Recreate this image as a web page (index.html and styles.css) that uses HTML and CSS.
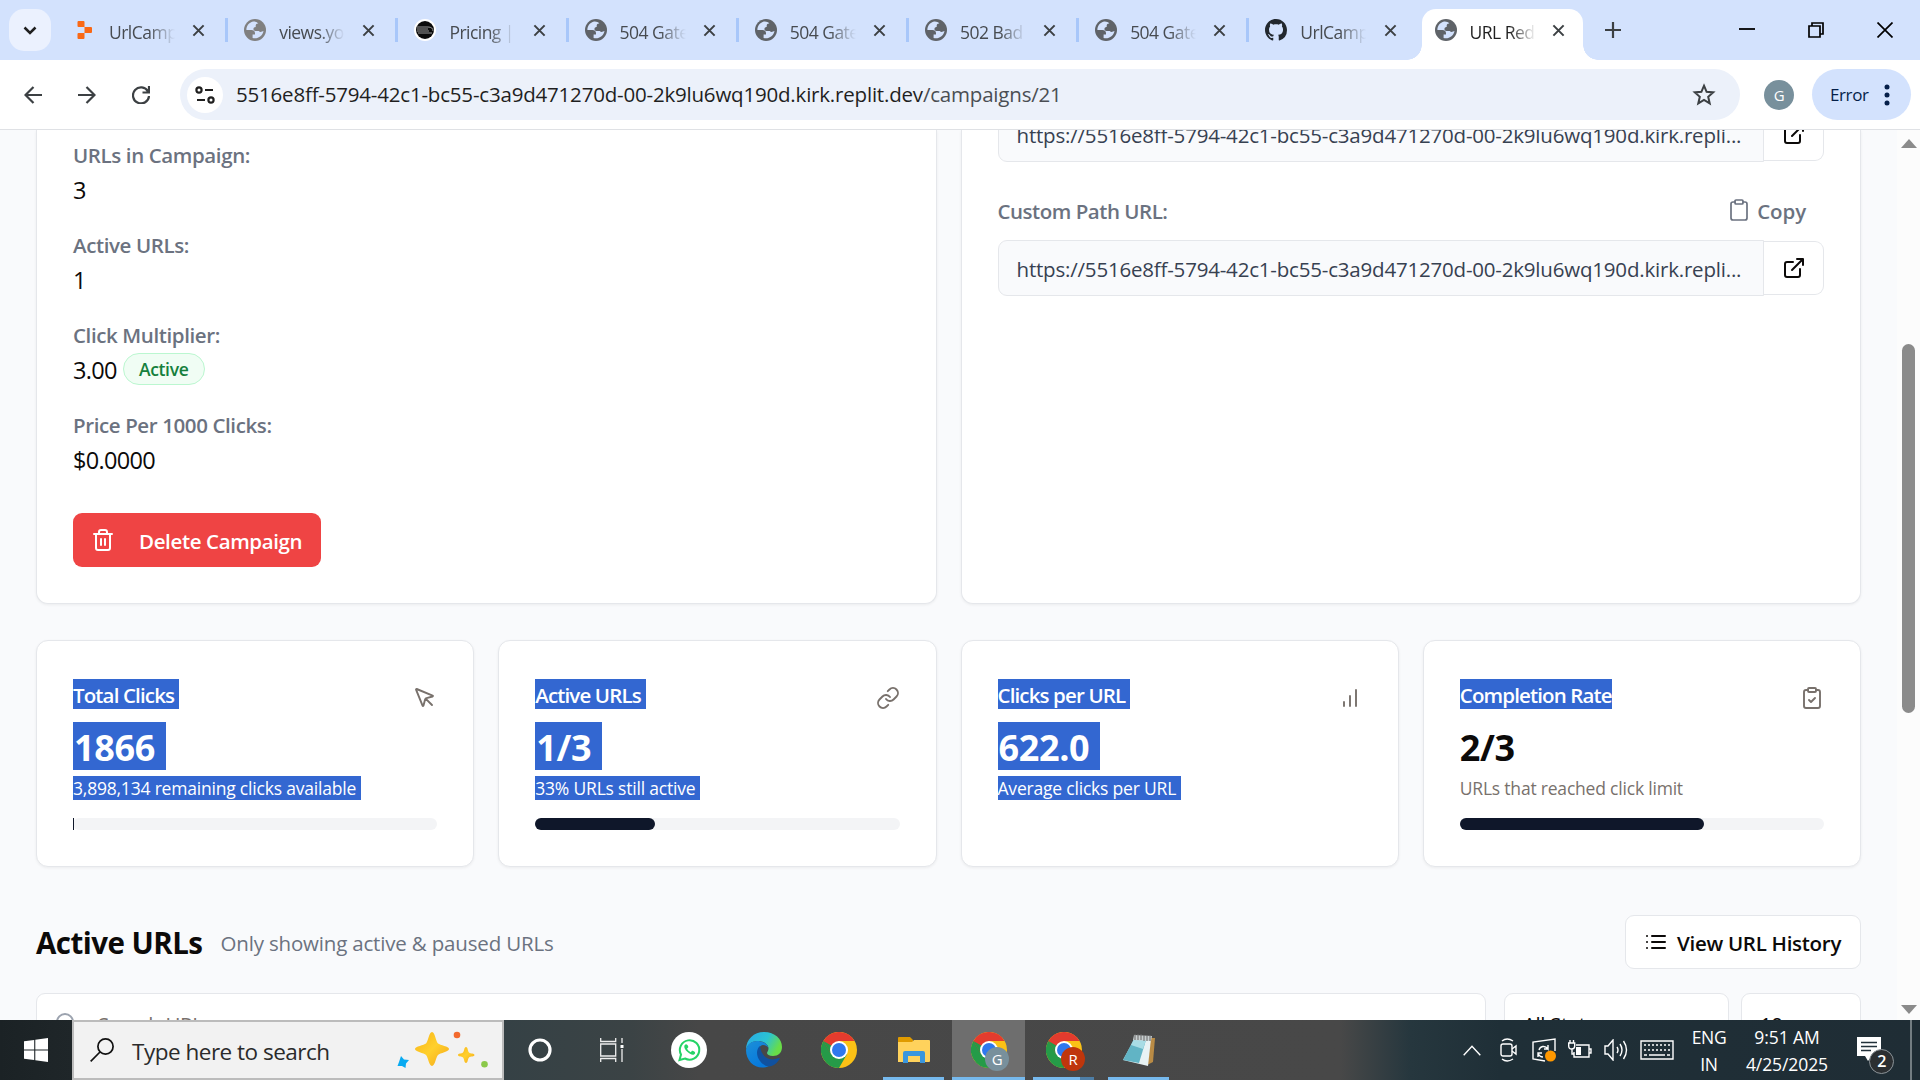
FILE: index.html
```html
<!DOCTYPE html>
<html lang="en">
<head>
<meta charset="utf-8">
<title>URL Redirector</title>
<link rel="stylesheet" href="styles.css">
</head>
<body>
<svg class="defs" width="0" height="0">
  <symbol id="globe" viewBox="0 0 22 22"><circle cx="11" cy="11" r="11" fill="currentColor"/><path class="land" d="M9 2.600C5 3.500 2.400 7 2.400 11h5.200c1.800 0 3.400 1.300 3.400 3v1.500H8.600V19c5 1.400 10-2 10.900-7l-1.500.6c-1 .8-2.500.6-3.200-.6h-3.300c-1.400 0-2.300-1.200-2-2.500.3-1 1.200-1.500 2.200-1.500V6.500c0-1.200 1-2 2.100-2h.6C13 3 11 2.300 9 2.600z"/></symbol>
  <symbol id="x" viewBox="0 0 14 14"><path d="M1.500 1.500l11 11M12.500 1.500l-11 11" fill="none" stroke="currentColor" stroke-width="2.200"/></symbol>
  <symbol id="external" viewBox="0 0 24 24"><path d="M15 3h6v6M10 14 21 3M18 13v6a2 2 0 0 1-2 2H5a2 2 0 0 1-2-2V8a2 2 0 0 1 2-2h6"/></symbol>
  <symbol id="chevron" viewBox="0 0 24 24"><path d="m6 9 6 6 6-6"/></symbol>
  <symbol id="chrome" viewBox="0 0 36 36"><circle cx="18" cy="18" r="18" fill="#fbc116"/><path d="M18 18 2.400 9A18 18 0 0 0 18 36l7.800-13.500z" fill="#259b48"/><path d="M2.400 9a18 18 0 0 1 31.200 0H18l-7.800 13.500z" fill="#e33b2e"/><path d="M2.400 9l7.800 13.500L18 18z" fill="#259b48"/><circle cx="18" cy="18" r="9" fill="#fff"/><circle cx="18" cy="18" r="7" fill="#2f78ee"/></symbol>
</svg>

<header class="tabstrip">
  <div class="tab-search"><svg width="14" height="9" viewBox="0 0 14 9"><path d="M1.500 1.500 7 7l5.500-5.500" fill="none" stroke="#1f1f1f" stroke-width="2.500"/></svg></div>
  <div class="tab"><svg class="fav" viewBox="0 0 22 22"><path d="M4.500 2h5q1 0 1 1v5h-6q-1 0-1-1V3q0-1 1-1zM10.500 8H17q1 0 1 1v4q0 1-1 1h-6.500zM4.500 14h6v5q0 1-1 1h-5q-1 0-1-1v-4q0-1 1-1z" fill="#f96815"/></svg><span class="tab-title">UrlCampaign</span><svg class="close"><use href="#x"/></svg></div>
  <div class="tab"><svg class="fav light"><use href="#globe"/></svg><span class="tab-title">views.youtube</span><svg class="close"><use href="#x"/></svg></div>
  <div class="tab"><svg class="fav" viewBox="0 0 22 22"><circle cx="11" cy="11" r="11" fill="#fff"/><circle cx="11" cy="11" r="9" fill="#0b0b0b"/><path d="M3 8h11q5 0 5 4M3 10h11M3 12h12M4 14h14" fill="none" stroke="#999" stroke-width="1"/></svg><span class="tab-title">Pricing | Plan</span><svg class="close"><use href="#x"/></svg></div>
  <div class="tab"><svg class="fav"><use href="#globe"/></svg><span class="tab-title">504 Gateway</span><svg class="close"><use href="#x"/></svg></div>
  <div class="tab"><svg class="fav"><use href="#globe"/></svg><span class="tab-title">504 Gateway</span><svg class="close"><use href="#x"/></svg></div>
  <div class="tab"><svg class="fav"><use href="#globe"/></svg><span class="tab-title">502 Bad Gate</span><svg class="close"><use href="#x"/></svg></div>
  <div class="tab"><svg class="fav"><use href="#globe"/></svg><span class="tab-title">504 Gateway</span><svg class="close"><use href="#x"/></svg></div>
  <div class="tab last"><svg class="fav big" viewBox="0 0 16 16"><path fill="#22282e" d="M8 0C3.580 0 0 3.580 0 8c0 3.540 2.290 6.530 5.470 7.590.4.070.55-.17.55-.38 0-.19-.01-.82-.01-1.490-2.010.37-2.530-.49-2.690-.94-.09-.23-.48-.94-.82-1.130-.28-.15-.68-.52-.01-.53.63-.01 1.080.58 1.230.82.72 1.210 1.870.87 2.330.66.07-.52.28-.87.51-1.070-1.780-.2-3.640-.89-3.640-3.950 0-.87.31-1.590.82-2.150-.08-.2-.36-1.020.08-2.120 0 0 .67-.21 2.200.82.64-.18 1.320-.27 2-.27s1.360.09 2 .27c1.530-1.040 2.200-.82 2.200-.82.44 1.100.16 1.920.08 2.120.51.56.82 1.270.82 2.150 0 3.070-1.870 3.750-3.650 3.950.29.25.54.73.54 1.480 0 1.070-.01 1.930-.01 2.200 0 .21.15.46.55.38A8.010 8.010 0 0 0 16 8c0-4.420-3.580-8-8-8z"/></svg><span class="tab-title">UrlCampaign</span><svg class="close"><use href="#x"/></svg></div>
  <div class="tab active"><svg class="fav"><use href="#globe"/></svg><span class="tab-title">URL Redirector</span><svg class="close"><use href="#x"/></svg></div>
  <svg class="new-tab" width="16" height="16" viewBox="0 0 16 16"><path d="M8 0v16M0 8h16" stroke="#3c4043" stroke-width="2.200"/></svg>
  <div class="window-controls">
    <svg width="16" height="16" viewBox="0 0 16 16"><path d="M0 7h16" stroke="#000" stroke-width="1.800"/></svg>
    <svg width="16" height="16" viewBox="0 0 16 16" fill="none" stroke="#000" stroke-width="1.700"><path d="M1 4h11v11H1zM4 4V1h11v11h-3"/></svg>
    <svg width="16" height="16" viewBox="0 0 16 16"><path d="m.5.5 15 15m0-15-15 15" stroke="#000" stroke-width="1.700"/></svg>
  </div>
</header>

<nav class="toolbar">
  <div class="nav-buttons">
    <svg width="18" height="18" viewBox="0 0 18 18"><path d="M18 9H2M9.500 1 1.500 9l8 8"/></svg>
    <svg width="18" height="18" viewBox="0 0 18 18"><path d="M0 9h16M8.500 1l8 8-8 8"/></svg>
    <svg width="18" height="18" viewBox="0 0 18 18"><path d="M16 5.500A8 8 0 1 0 17 10M17 0v6.500h-6.500"/></svg>
  </div>
  <div class="omnibox">
    <span class="site-info"><svg width="20" height="18" viewBox="0 0 20 18" fill="none" stroke="#1f1f1f" stroke-width="2.200"><circle cx="4" cy="4" r="2.600"/><path d="M10 4h8M2 14h8"/><circle cx="16" cy="14" r="2.600"/></svg></span>
    <span class="address">5516e8ff-5794-42c1-bc55-c3a9d471270d-00-2k9lu6wq190d.kirk.replit.dev<span>/campaigns/21</span></span>
    <svg class="star" width="24" height="24" viewBox="0 0 24 24"><path d="m12 2.700 2.600 6.100 6.600.6-5 4.400 1.500 6.500-5.700-3.500-5.700 3.500 1.500-6.500-5-4.400 6.600-.6z" fill="none" stroke="#3c4043" stroke-width="2"/></svg>
  </div>
  <span class="avatar">G</span>
  <div class="error-pill"><span>Error</span><svg width="6" height="22" viewBox="0 0 6 22" fill="#041e49"><circle cx="3" cy="3" r="2.500"/><circle cx="3" cy="11" r="2.500"/><circle cx="3" cy="19" r="2.500"/></svg></div>
</nav>

<div class="viewport">
<main class="page">
  <div class="details">
    <section class="card info">
      <div class="field"><div class="label">URLs in Campaign:</div><div class="value">3</div></div>
      <div class="field"><div class="label">Active URLs:</div><div class="value">1</div></div>
      <div class="field"><div class="label">Click Multiplier:</div><div class="value">3.00 <span class="badge">Active</span></div></div>
      <div class="field"><div class="label">Price Per 1000 Clicks:</div><div class="value">$0.0000</div></div>
      <button class="delete"><svg class="icon" viewBox="0 0 24 24"><path d="M3 6h18M19 6v14c0 1-1 2-2 2H7c-1 0-2-1-2-2V6M8 6V4c0-1 1-2 2-2h4c1 0 2 1 2 2v2M10 11v6M14 11v6"/></svg><span>Delete Campaign</span></button>
    </section>
    <section class="card links">
      <div class="url-row"><div class="url-box"><span>https://5516e8ff-5794-42c1-bc55-c3a9d471270d-00-2k9lu6wq190d.kirk.repli...</span></div><div class="open"><svg class="icon"><use href="#external"/></svg></div></div>
      <div class="url-head"><span class="path-label">Custom Path URL:</span><span class="copy"><svg class="icon" viewBox="0 0 24 24"><rect x="8" y="2" width="8" height="4" rx="1"/><path d="M16 4h2a2 2 0 0 1 2 2v14a2 2 0 0 1-2 2H6a2 2 0 0 1-2-2V6a2 2 0 0 1 2-2h2"/></svg><span>Copy</span></span></div>
      <div class="url-row"><div class="url-box"><span>https://5516e8ff-5794-42c1-bc55-c3a9d471270d-00-2k9lu6wq190d.kirk.repli...</span></div><div class="open"><svg class="icon"><use href="#external"/></svg></div></div>
    </section>
  </div>

  <div class="stats">
    <section class="card stat">
      <div class="stat-head"><span class="stat-title"><mark class="trail">Total Clicks</mark></span><svg class="icon" viewBox="0 0 24 24"><path d="M12.600 12.600 19 19M3.700 3a.5.500 0 0 0-.65.650l6.500 16a.5.500 0 0 0 .95-.060l1.570-6.080a2 2 0 0 1 1.430-1.430l6.090-1.570a.5.500 0 0 0 .06-.95z"/></svg></div>
      <div class="stat-value"><mark class="trail">1866</mark></div>
      <div class="stat-note"><mark class="trail">3,898,134 remaining clicks available</mark></div>
      <div class="track"><div class="fill sliver"></div></div>
    </section>
    <section class="card stat">
      <div class="stat-head"><span class="stat-title"><mark class="trail">Active URLs</mark></span><svg class="icon" viewBox="0 0 24 24"><path d="M10 13a5 5 0 0 0 7.540.54l3-3a5 5 0 0 0-7.070-7.070l-1.720 1.710M14 11a5 5 0 0 0-7.540-.54l-3 3a5 5 0 0 0 7.070 7.070l1.710-1.710"/></svg></div>
      <div class="stat-value"><mark class="trail">1/3</mark></div>
      <div class="stat-note"><mark class="trail">33% URLs still active</mark></div>
      <div class="track"><div class="fill" style="width:33%"></div></div>
    </section>
    <section class="card stat">
      <div class="stat-head"><span class="stat-title"><mark class="trail">Clicks per URL</mark></span><svg class="icon" viewBox="0 0 24 24"><path d="M12 20V10M18 20V4M6 20v-4"/></svg></div>
      <div class="stat-value"><mark class="trail">622.0</mark></div>
      <div class="stat-note"><mark class="trail">Average clicks per URL</mark></div>
    </section>
    <section class="card stat">
      <div class="stat-head"><span class="stat-title"><mark>Completion Rate</mark></span><svg class="icon" viewBox="0 0 24 24"><rect x="8" y="2" width="8" height="4" rx="1"/><path d="M16 4h2a2 2 0 0 1 2 2v14a2 2 0 0 1-2 2H6a2 2 0 0 1-2-2V6a2 2 0 0 1 2-2h2M9 14l2 2 4-4"/></svg></div>
      <div class="stat-value"><span>2/3</span></div>
      <div class="stat-note"><span>URLs that reached click limit</span></div>
      <div class="track"><div class="fill" style="width:67%"></div></div>
    </section>
  </div>

  <div class="list-head">
    <h2>Active URLs</h2><span class="hint">Only showing active &amp; paused URLs</span>
    <button class="history"><svg class="icon" viewBox="0 0 24 24"><path d="M3 6h.01M3 12h.01M3 18h.01M8 6h13M8 12h13M8 18h13"/></svg><span>View URL History</span></button>
  </div>
  <div class="filters">
    <div class="control search"><svg class="icon" viewBox="0 0 24 24"><circle cx="11" cy="11" r="8"/><path d="m21 21-4.300-4.300"/></svg><span>Search URLs...</span></div>
    <div class="control status"><span>All Statuses</span><svg class="icon"><use href="#chevron"/></svg></div>
    <div class="control count"><span>10</span><svg class="icon"><use href="#chevron"/></svg></div>
  </div>
</main>
<div class="scrollbar">
  <svg width="16" height="9" viewBox="0 0 16 9"><path d="M8 0l8 9H0z" fill="#8b8b8b"/></svg>
  <div class="thumb"></div>
  <svg width="16" height="9" viewBox="0 0 16 9"><path d="M8 9l8-9H0z" fill="#8b8b8b"/></svg>
</div>
</div>

<footer class="taskbar">
  <div class="start"><svg width="24" height="24" viewBox="0 0 24 24" fill="#fff"><path d="M0 3.300 10.200 2v9.500H0zM11.300 1.800 24 0v11.500H11.300zM0 12.500h10.200V22L0 20.700zM11.300 12.500H24V24l-12.700-1.800z"/></svg></div>
  <div class="task-search">
    <svg width="24" height="24" viewBox="0 0 24 24" fill="none" stroke="#111" stroke-width="1.700"><circle cx="15.500" cy="8.500" r="7.600"/><path d="M10 14 .7 23.300"/></svg>
    <span>Type here to search</span>
    <svg class="sparkles" width="92" height="40" viewBox="396 1030 92 40"><defs><linearGradient id="gold" x2="1" y2="1"><stop offset="0" stop-color="#f7b21a"/><stop offset=".5" stop-color="#ffd02c"/><stop offset="1" stop-color="#f4a51c"/></linearGradient></defs><path d="M432 1032c3 0 4 10 6 11.500s11 3 11 5.500-9 4-11 6-3 11-6 11-4-9-6-11-11-3.500-11-6 9-4 11-5.500 3-11.500 6-11.500z" fill="url(#gold)"/><path d="M466 1047c2 0 1.500 4 3 5.500s5.500.5 5.500 2.500-4 1-5.500 2.500-1 5.500-3 5.500-1.500-4-3-5.500-5-.500-5-2.500 3.500-1 5-2.500 1-5.500 3-5.500z" fill="url(#gold)"/><path d="m401 1056 3 3.500 5 .500-3 3.500-.500 4.500-3.500-2-4.500 0 1.500-4z" fill="#08aaf1"/><circle cx="457" cy="1035" r="3.300" fill="#f36a2e"/><circle cx="484.500" cy="1064.300" r="3.300" fill="#8bc94a"/></svg>
  </div>
  <div class="apps">
    <div class="app"><svg width="24" height="24" viewBox="0 0 24 24"><circle cx="12" cy="12" r="10" fill="none" stroke="#fff" stroke-width="3.200"/></svg></div>
    <div class="app tv"><svg width="24" height="24" viewBox="0 0 24 24" fill="none" stroke="#eee" stroke-width="1.300"><path d="M.7 0v3.500h15V0M.7 24v-3.500h15V24M.7 6h15v12H.7zM22 0v5M22 11v13"/><path d="M20.500 7h3v3h-3z" fill="#fff" stroke="none"/></svg></div>
    <div class="app"><svg width="36" height="36" viewBox="0 0 36 36"><circle cx="18" cy="18" r="18" fill="#fff"/><path d="m8.500 28 1.500-5.500A9.700 9.700 0 1 1 14 26.500z" fill="none" stroke="#25d366" stroke-width="2"/><path d="M14.500 12.500c-2 1-1.500 4 1.500 7s6.500 4.500 8 2c1-1.700-2.500-3-3-2.700l-1.200 1.400c-1.500-.5-3.200-2.200-3.700-3.700l1.200-1.200c.3-.6-1.200-3.800-2.800-2.800z" fill="#25d366"/></svg></div>
    <div class="app"><svg width="36" height="36" viewBox="0 0 36 36"><defs><linearGradient id="edgeTop" x2="1" y2=".4"><stop offset="0" stop-color="#28a9e8"/><stop offset=".6" stop-color="#2bc3d2"/><stop offset="1" stop-color="#68dd48"/></linearGradient><linearGradient id="edgeLow" x2=".6" y2="1"><stop offset="0" stop-color="#1c8fd8"/><stop offset="1" stop-color="#0678dc"/></linearGradient></defs><path d="M0 18C0 7 8 0 18 0c11 0 18 7 18 15 0 6-4 9-9 9-4 0-6-1.500-6-3 0-1 1.500-2 1.500-4.500C22.500 13 18 9 12 9 5 9 1 13 0 18z" fill="url(#edgeTop)"/><path d="M0 18C1 12 6 9 11 9c6 0 11 3 11.500 7.500-.5-2-3-3.500-5.500-3.500-3 0-5 4-5 7 0 6 5 12 11 14-11 5-23-3-23-16z" fill="url(#edgeLow)"/><path d="M14 14c-4 3-4 10 0 15 3 4 7 6 11 5.300 4-1.500 7-4.300 8.700-7.500.3-.7-.3-1-1-.7-8 3.500-17 .400-18.700-12.100z" fill="#10519f"/></svg></div>
    <div class="app"><svg width="36" height="36"><use href="#chrome"/></svg></div>
    <div class="app line"><svg width="32" height="27" viewBox="0 0 32 27"><path d="M0 1q0-1 1-1h11l3 3v4H0z" fill="#e09b00"/><path d="M0 5h14l2-2h15q1 0 1 1v20q0 1-1 1H0z" fill="#ffd25c"/><path d="M5 26V16q0-2 2-2h18q2 0 2 2v10h-5v-7H10v7z" fill="#3a96dd"/></svg></div>
    <div class="app current"><svg width="36" height="36"><use href="#chrome"/></svg><span class="profile">G</span></div>
    <div class="app line stack"><svg width="36" height="36"><use href="#chrome"/></svg><span class="profile red">R</span></div>
    <div class="app line"><svg width="34" height="34" viewBox="0 0 34 34"><path d="M28 5h5l-2 24-6 3z" fill="#b98b45"/><path d="m13 5 16 1-3 27L1 27z" fill="#e8f2f4"/><path d="m12 6 12 1-7 23L1 27z" fill="#61b4c5"/><path d="m12 6 12 1-3 9-12-4z" fill="#a8dce5"/><path d="m12 2 18 1-1 5-18-1z" fill="#c9cfd0"/><path d="m13 1v6m3-6v6m3-6v6m3-5v6m3-6v6m3-6v6" stroke="#666" stroke-width="1"/></svg></div>
  </div>
  <div class="tray">
    <svg class="t1" width="18" height="11" viewBox="0 0 18 11"><path d="m.7 10.300 8.300-9 8.300 9"/></svg>
    <svg class="t2" width="18" height="24" viewBox="0 0 18 24"><rect x="1" y="6" width="11" height="12" rx="2"/><path d="m12 11 4-3v8l-4-3M2 3q5-4 11 0M2 21q5 4 11 0"/></svg>
    <svg class="t3" width="24" height="24" viewBox="0 0 24 24"><path d="M23 13V1L1 4v17l12 2"/><path d="M7 12c1-4 6-5 9-1V7m0 4h-4M6 19v-4h4m-4 0c1 3 3 4 5 4"/><circle cx="18.500" cy="18" r="5.500" fill="#ff9800" stroke="none"/></svg>
    <svg class="t4" width="24" height="20" viewBox="0 0 24 20"><path d="M8 5h13v12H6v-5M21 9h2v4h-2M2 0v3m3.500-3v3M.700 3h6v3q0 3-3 3T.7 6zM4 9v5h2"/><path d="M8 7h5v8H8z" fill="#fff" stroke="none"/></svg>
    <svg class="t5" width="24" height="22" viewBox="0 0 24 22"><path d="M1 7h3l5-6v20l-5-6H1zM13 8q2 3 0 6M16 5q4 6 0 12M19.500 2q6 9 0 18"/></svg>
    <svg class="t6" width="34" height="20" viewBox="0 0 34 20"><path d="M1 1h32v18H1z"/><path d="M4 5h26M4 10h26" stroke-dasharray="2 2"/><path d="M4 15h3m2 0h16m2 0h3"/></svg>
    <div class="tray-text lang"><span>ENG</span><span>IN</span></div>
    <div class="tray-text clock"><span>9:51 AM</span><span>4/25/2025</span></div>
    <div class="notify"><svg width="24" height="26" viewBox="0 0 24 26"><path d="M0 0h24v19H15l-4 5-3-5H0z" fill="#fff" stroke="none"/><path d="M4 5.500h16M4 9.500h16M4 13.500h10" stroke="#22313a" stroke-width="1.500"/></svg><span class="notify-count">2</span></div>
    <div class="peek"></div>
  </div>
</footer>
</body>
</html>
```
FILE: styles.css
```css
* { box-sizing: border-box; }
body { margin: 0; width: 1920px; height: 1080px; overflow: hidden; display: flex; flex-direction: column; font-family: "Open Sans", "Noto Sans", sans-serif; color: #0c0a09; background: #fff; letter-spacing: -0.025em; }
svg { flex: none; display: block; }
.defs { position: absolute; }
button { font: inherit; letter-spacing: inherit; margin: 0; }
.icon { width: 24px; height: 24px; fill: none; stroke: currentColor; stroke-width: 2; stroke-linecap: round; stroke-linejoin: round; }

/* Browser tabs */
.tabstrip { height: 60px; flex: none; display: flex; align-items: center; background: #d3e2fd; padding-left: 9px; }
.tab-search { width: 42px; height: 42px; border-radius: 15px; background: #ebf1fe; display: flex; align-items: center; justify-content: center; margin-right: 6px; flex: none; }
.tab { width: 170.200px; height: 51px; margin-top: 9px; padding: 0 22px 9px 17px; flex: none; display: flex; align-items: center; position: relative; color: #474b50; }
.tab::after { content: ""; position: absolute; right: -1px; top: 9px; width: 3px; height: 24px; background: #a8c7fa; }
.tab.last::after, .tab.active::after { display: none; }
.fav { width: 22px; height: 22px; color: #5f6368; fill: none; }
.fav.light { color: #808080; }
.land { fill: #d3e2fd; }
.tab-title { width: 66px; margin-left: 13px; padding-top: 3px; font-size: 17.500px; line-height: 26px; overflow: hidden; white-space: nowrap; letter-spacing: -0.03em; -webkit-mask-image: linear-gradient(90deg, #000 60%, transparent); mask-image: linear-gradient(90deg, #000 60%, transparent); }
.close { width: 13px; height: 13px; margin-left: auto; color: #3c4043; }
.tab.active { color: #1f1f1f; width: 161px; margin-left: 3px; padding-left: 13px; padding-right: 18px; background: #fff; border-radius: 14px 14px 0 0; }
.tab.active::before, .tab.active::after { content: ""; display: block; position: absolute; bottom: 0; top: auto; width: 15px; height: 15px; }
.tab.active::before { left: -15px; background: radial-gradient(circle at 0 0, transparent 14.500px, #fff 15px); }
.tab.active::after { right: -15px; background: radial-gradient(circle at 100% 0, transparent 14.500px, #fff 15px); }
.new-tab { margin-left: 22px; }
.window-controls { margin-left: auto; padding-right: 27px; display: flex; gap: 53px; }

/* Toolbar */
.toolbar { height: 70px; flex: none; display: flex; align-items: center; padding: 0 9px 0 24px; border-bottom: 1px solid #dfe1e5; background: #fff; }
.nav-buttons { display: flex; gap: 36px; fill: none; stroke: #3c4043; stroke-width: 2.200; }
.omnibox { width: 1560px; height: 51px; margin-left: 30px; border-radius: 26px; background: #ecf1fa; display: flex; align-items: center; padding: 0 24px 0 7px; }
.site-info { width: 36px; height: 36px; border-radius: 50%; background: #fff; display: flex; align-items: center; justify-content: center; }
.address { margin-left: 13px; padding-bottom: 2px; font-size: 20.500px; line-height: 30px; white-space: nowrap; color: #1f1f1f; letter-spacing: -0.0095em; }
.address span { color: #4a4e53; }
.star { margin-left: auto; }
.avatar { width: 30px; height: 30px; margin-left: 24px; border-radius: 50%; background: #78909c; color: #fff; font-size: 15px; line-height: 30px; text-align: center; }
.error-pill { width: 99px; height: 51px; margin-left: auto; border-radius: 26px; background: #d3e2fd; color: #041e49; display: flex; align-items: center; justify-content: space-between; padding: 0 21px 0 18px; font-size: 17px; }

/* Page */
.viewport { height: 890px; flex: none; display: flex; overflow: hidden; background: #f9fafc; }
.page { width: 1897px; padding: 0 36px; overflow: hidden; }
.card { background: #fff; border: 1px solid #e5e7eb; border-radius: 12px; box-shadow: 0 1px 3px rgba(0, 0, 0, .06); }
.details { display: grid; grid-template-columns: 1fr 1fr; gap: 24px; height: 474px; }
.info, .links { border-top: 0; border-radius: 0 0 12px 12px; padding: 0 36px; }
.info { padding-top: 10px; }
.field { height: 90px; }
.label { font-size: 20.500px; line-height: 30px; font-weight: 600; letter-spacing: -0.019em; color: #6b7280; }
.value { margin-top: 2px; font-size: 23.500px; line-height: 36px; height: 36px; display: flex; align-items: center; gap: 6px; letter-spacing: -0.03em; }
.badge { width: 82px; height: 32px; margin-top: -3px; border: 1px solid #bbf7d0; border-radius: 16px; background: #f0fdf4; color: #15803d; font-size: 17.500px; line-height: 31px; font-weight: 600; letter-spacing: -0.02em; text-align: center; }
.delete { width: 248px; height: 54px; margin-top: 13px; border: 0; border-radius: 9px; background: #ef4444; color: #fff; display: flex; align-items: center; padding: 2px 18px 0; font-size: 20.500px; font-weight: 600; letter-spacing: -0.018em; white-space: nowrap; }
.delete .icon { margin-right: 24px; margin-top: -3px; }
.links { overflow: hidden; }
.url-row { display: flex; align-items: center; margin-top: -24px; height: 56px; }
.url-box { width: 767px; height: 56px; border: 1px solid #e5e7eb; border-radius: 9px 0 0 9px; background: #f9fafc; color: #374151; font-size: 20.500px; line-height: 56px; padding-left: 18px; white-space: nowrap; letter-spacing: -0.0095em; }
.open { width: 60px; height: 54px; border: 1px solid #e5e7eb; border-left: 0; border-radius: 0 9px 9px 0; display: flex; align-items: center; justify-content: center; }
.url-head { height: 54px; margin-top: 24px; display: flex; align-items: center; justify-content: space-between; color: #6b7280; font-size: 20.500px; font-weight: 600; letter-spacing: -0.023em; padding: 0 18px 4px 0; }
.copy { display: flex; align-items: center; gap: 6px; letter-spacing: -0.005em; }
.copy .icon { stroke-width: 1.700; margin-top: -3px; }
.url-head + .url-row { margin-top: 0; }

.stats { display: grid; grid-template-columns: repeat(4, 1fr); gap: 24px; margin-top: 36px; }
.stat { height: 227px; padding: 38px 36px 0; }
.stat-head { display: flex; align-items: center; justify-content: space-between; height: 30px; color: #78716c; }
.stat-head .icon { margin-top: 8px; stroke-width: 1.900; }
mark { display: inline-block; background: #3367d1; color: #fff; }
.stat-title { font-size: 20.500px; line-height: 30px; height: 30px; font-weight: 600; letter-spacing: -0.042em; }
.stat-title mark { height: 30px; padding-top: 1px; line-height: 30px; }
.stat-title .trail { padding-right: 5px; }
.stat-value { margin-top: 13px; font-size: 36px; line-height: 48px; font-weight: 700; height: 48px; letter-spacing: -0.01em; }
.stat-value mark, .stat-value span { display: inline-block; height: 48px; padding-top: 2px; }
.stat-value .trail { padding-right: 11px; padding-left: 1px; }
.stat-note { margin-top: 6px; height: 24px; font-size: 17.500px; line-height: 24px; color: #78716c; white-space: nowrap; letter-spacing: -0.0115em; }
.stat-note .trail { padding-right: 5px; }
.track { height: 12px; margin-top: 18px; border-radius: 6px; background: #f3f4f6; }
.fill { height: 12px; border-radius: 6px; background: #0f172a; }
.fill.sliver { width: 1px; border-radius: 0; }

.list-head { display: flex; align-items: center; height: 54px; margin-top: 48px; }
.list-head h2 { margin: 0; padding-top: 2px; font-size: 29.500px; line-height: 42px; font-weight: 700; letter-spacing: -0.018em; }
.hint { margin-left: 18px; padding-top: 2px; font-size: 20.500px; color: #6b7280; letter-spacing: -0.0085em; }
.history { width: 236px; height: 54px; margin-left: auto; border: 1px solid #e5e7eb; border-radius: 9px; background: #fff; display: flex; align-items: center; gap: 9px; padding: 2px 18px 0; font-size: 20.500px; font-weight: 600; letter-spacing: -0.014em; white-space: nowrap; color: #0c0a09; }
.history .icon { margin-top: -3px; }
.filters { display: flex; margin-top: 24px; font-size: 20.500px; }
.control { height: 60px; flex: none; border: 1px solid #e5e7eb; border-radius: 9px; background: #fff; display: flex; align-items: center; justify-content: space-between; padding: 2px 18px 0; }
.search { width: 1450px; margin-right: 18px; padding-left: 17px; justify-content: flex-start; gap: 20px; color: #78716c; }
.search .icon { color: #9ca3af; margin-top: -2px; }
.status { width: 225px; margin-right: 12px; }
.count { width: 120px; }
.status .icon, .count .icon { color: #777; }

.scrollbar { width: 23px; background: #fcfcfc; display: flex; flex-direction: column; align-items: center; padding: 9px 0 6px; }
.thumb { width: 13px; height: 369px; margin: 196px 0 auto; border-radius: 7px; background: #8b8b8b; }

/* Desktop taskbar */
.taskbar { height: 60px; flex: none; display: flex; background: linear-gradient(90deg, #1b2225 0, #1f2629 72px, #354145 504px, #3b4345 630px, #474747 700px, #484848 1340px, #26373e 1410px, #1f2f37 1500px, #1f2d35 1920px); color: #fff; }
.start { width: 72px; display: flex; align-items: center; justify-content: center; }
.task-search { width: 432px; border: 2px solid #bcbcbc; background: #f2f2f2; color: #2b2b2b; display: flex; align-items: center; padding: 0 14px 0 16px; font-size: 22.500px; }
.task-search span { margin-left: 18px; padding-top: 2px; white-space: nowrap; letter-spacing: -0.022em; }
.sparkles { margin-left: auto; }
.apps { display: flex; }
.app { width: 75px; display: flex; align-items: center; justify-content: center; position: relative; }
.app:first-child { width: 72px; }
.app.tv { width: 73px; padding-right: 1px; margin-right: 2px; }
.app.line::after { content: ""; position: absolute; left: 7px; right: 7px; bottom: 0; height: 3px; background: #76b9ed; }
.app.stack::after { background: linear-gradient(90deg, #76b9ed 47px, #4e7ea6 47px); }
.current { background: #6e6e6e; border-bottom: 3px solid #76b9ed; padding-top: 3px; width: 73px; margin: 0 1px; }
.profile { position: absolute; right: 16px; bottom: 6px; width: 24px; height: 24px; border-radius: 50%; background: #78909c; color: #fff; font-size: 15px; line-height: 24px; text-align: center; }
.current .profile { bottom: 6px; }
.profile.red { background: #bf360c; bottom: 9px; }
.tray { margin-left: auto; display: flex; align-items: center; fill: none; stroke: #fff; stroke-width: 1.400; }
.t2 { margin-left: 19px; }
.t3 { margin-left: 14px; }
.t4 { margin-left: 12px; }
.t5 { margin-left: 12px; }
.t6 { margin-left: 12px; }
.tray-text { display: flex; flex-direction: column; align-items: center; padding-top: 1px; font-size: 17.500px; line-height: 27px; }
.lang { width: 36px; margin-left: 17px; }
.clock { width: 88px; margin-left: 16px; letter-spacing: -0.005em; }
.notify { position: relative; margin-left: 26px; }
.notify-count { position: absolute; left: 12px; top: 12px; width: 25px; height: 25px; border-radius: 50%; border: 1px solid #8c9499; background: #2b2f32; font-size: 16px; font-weight: 600; line-height: 23px; text-align: center; }
.peek { width: 2px; height: 60px; margin: 0 8px 0 29px; background: #737d82; }
```
